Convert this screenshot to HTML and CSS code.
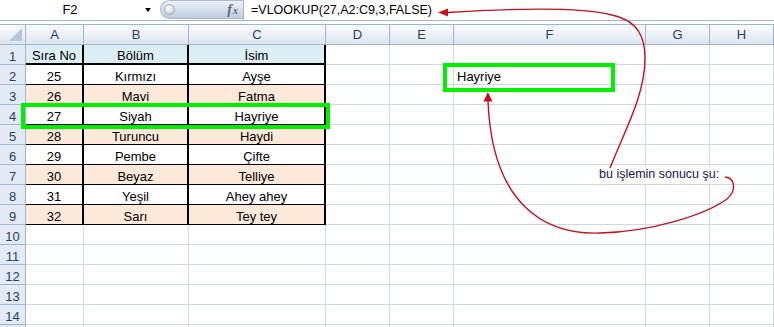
FILE: index.html
```html
<!DOCTYPE html>
<html lang="tr">
<head>
  <meta charset="UTF-8" />
  <title>DÜŞEYARA örneği</title>
  <link rel="stylesheet" href="styles.css">
</head>
<body>
  <div class="window">

    <!-- Formula bar -->
    <div class="formula-bar">
      <div class="name-box">
        <span class="name">F2</span>
        <span class="drop"></span>
      </div>
      <div class="fx-pill">
        <span class="knob"></span>
        <span class="fx"><i>f</i><i class="sub">x</i></span>
      </div>
      <div class="formula">=VLOOKUP(27,A2:C9,3,FALSE)</div>
    </div>

    <!-- Sheet -->
    <div class="sheet">
      <div class="row head">
        <div class="corner"></div>
        <div class="col-h">A</div><div class="col-h">B</div><div class="col-h">C</div><div class="col-h">D</div>
        <div class="col-h">E</div><div class="col-h">F</div><div class="col-h">G</div><div class="col-h">H</div>
      </div>

      <div class="row r1">
        <div class="row-h">1</div>
        <div class="c d top blue">Sıra No</div><div class="c d top blue">Bölüm</div><div class="c d top blue">İsim</div>
        <div class="c"></div><div class="c"></div><div class="c"></div><div class="c"></div><div class="c"></div>
      </div>
      <div class="row">
        <div class="row-h">2</div>
        <div class="c d">25</div><div class="c d">Kırmızı</div><div class="c d">Ayşe</div>
        <div class="c"></div><div class="c"></div><div class="c left">Hayriye</div><div class="c"></div><div class="c"></div>
      </div>
      <div class="row">
        <div class="row-h">3</div>
        <div class="c d peach">26</div><div class="c d peach">Mavi</div><div class="c d peach">Fatma</div>
        <div class="c"></div><div class="c"></div><div class="c"></div><div class="c"></div><div class="c"></div>
      </div>
      <div class="row">
        <div class="row-h">4</div>
        <div class="c d">27</div><div class="c d">Siyah</div><div class="c d">Hayriye</div>
        <div class="c"></div><div class="c"></div><div class="c"></div><div class="c"></div><div class="c"></div>
      </div>
      <div class="row">
        <div class="row-h">5</div>
        <div class="c d peach">28</div><div class="c d peach">Turuncu</div><div class="c d peach">Haydi</div>
        <div class="c"></div><div class="c"></div><div class="c"></div><div class="c"></div><div class="c"></div>
      </div>
      <div class="row">
        <div class="row-h">6</div>
        <div class="c d">29</div><div class="c d">Pembe</div><div class="c d">Çifte</div>
        <div class="c"></div><div class="c"></div><div class="c"></div><div class="c"></div><div class="c"></div>
      </div>
      <div class="row">
        <div class="row-h">7</div>
        <div class="c d peach">30</div><div class="c d peach">Beyaz</div><div class="c d peach">Telliye</div>
        <div class="c"></div><div class="c"></div><div class="c"></div><div class="c"></div><div class="c"></div>
      </div>
      <div class="row">
        <div class="row-h">8</div>
        <div class="c d">31</div><div class="c d">Yeşil</div><div class="c d">Ahey ahey</div>
        <div class="c"></div><div class="c"></div><div class="c"></div><div class="c"></div><div class="c"></div>
      </div>
      <div class="row">
        <div class="row-h">9</div>
        <div class="c d peach">32</div><div class="c d peach">Sarı</div><div class="c d peach">Tey tey</div>
        <div class="c"></div><div class="c"></div><div class="c"></div><div class="c"></div><div class="c"></div>
      </div>
      <div class="row">
        <div class="row-h">10</div>
        <div class="c"></div><div class="c"></div><div class="c"></div><div class="c"></div>
        <div class="c"></div><div class="c"></div><div class="c"></div><div class="c"></div>
      </div>
      <div class="row">
        <div class="row-h">11</div>
        <div class="c"></div><div class="c"></div><div class="c"></div><div class="c"></div>
        <div class="c"></div><div class="c"></div><div class="c"></div><div class="c"></div>
      </div>
      <div class="row">
        <div class="row-h">12</div>
        <div class="c"></div><div class="c"></div><div class="c"></div><div class="c"></div>
        <div class="c"></div><div class="c"></div><div class="c"></div><div class="c"></div>
      </div>
      <div class="row">
        <div class="row-h">13</div>
        <div class="c"></div><div class="c"></div><div class="c"></div><div class="c"></div>
        <div class="c"></div><div class="c"></div><div class="c"></div><div class="c"></div>
      </div>
      <div class="row">
        <div class="row-h">14</div>
        <div class="c"></div><div class="c"></div><div class="c"></div><div class="c"></div>
        <div class="c"></div><div class="c"></div><div class="c"></div><div class="c"></div>
      </div>
      <div class="row last">
        <div class="row-h"></div>
        <div class="c"></div><div class="c"></div><div class="c"></div><div class="c"></div>
        <div class="c"></div><div class="c"></div><div class="c"></div><div class="c"></div>
      </div>
    </div>

    <!-- Drawn shapes on top of the sheet -->
    <div class="mark mark-row"></div>
    <div class="mark mark-result"></div>
    <div class="note">bu işlemin sonucu şu:</div>

    <svg class="arrows" width="774" height="327" viewBox="0 0 774 327">
      <path d="M447 12.5 C520 8 585 8 612 15 C640 21 645 40 645 58 C645 95 625 130 610 168" />
      <polygon points="438,12.5 448,8.5 448,16.5" />
      <path d="M725 177 C735 178 737 190 727 199 C705 215 650 232 600 233 C545 235 492 205 488 101" />
      <polygon points="487.8,92 483.5,101.5 492.5,101.5" />
    </svg>
  </div>
</body>
</html>
```

FILE: styles.css
```css
* {
  box-sizing: border-box;
}

body {
  margin: 0;
  width: 774px;
  height: 327px;
  overflow: hidden;
  background: #fff;
  font-family: "Liberation Sans", Arial, sans-serif;
  font-size: 13px;
  color: #000;
}

.window {
  position: relative;
  width: 774px;
  height: 327px;
  overflow: hidden;
}

/* Formula bar */
.formula-bar {
  display: flex;
  height: 21px;
  border-bottom: 1px solid #a3b5cc;
  margin-bottom: 3px;
}

.name-box {
  display: flex;
  align-items: center;
  width: 160px;
}

.name {
  width: 140px;
  text-align: center;
  line-height: 20px;
}

.drop {
  width: 0;
  height: 0;
  margin-left: 5px;
  border-top: 4px solid #000;
  border-left: 3.5px solid transparent;
  border-right: 3.5px solid transparent;
}

.fx-pill {
  display: flex;
  align-items: center;
  justify-content: space-between;
  width: 83px;
  height: 19px;
  border: 1px solid #a7b8cf;
  border-right: none;
  border-radius: 10px 0 0 10px;
  background: linear-gradient(#eef2f8, #d2dcea 55%, #bfcde0);
}

.knob {
  width: 11px;
  height: 11px;
  margin-left: 3px;
  border-radius: 50%;
  border: 1px solid #a5afbc;
  background: radial-gradient(circle at 40% 35%, #ffffff, #d8dde4 60%, #a9b2be);
}

.fx {
  padding-right: 5px;
  font-family: "Liberation Serif", serif;
  font-size: 14px;
  font-weight: bold;
  color: #5d6876;
}

.fx .sub {
  font-size: 10px;
  margin-left: 1px;
}

.formula {
  flex: 1;
  border-left: 1px solid #a7b8cf;
  padding-left: 7px;
  line-height: 20px;
  font-size: 12.5px;
}

/* Sheet grid */
.row {
  display: grid;
  grid-template-columns: 26px 58px 105px 137px 64px 64px 192px 64px 64px;
  height: 20px;
}

.row.head {
  height: 21px;
}

.corner,
.col-h {
  border-top: 1px solid #9eb6ce;
  border-right: 1px solid #9eb6ce;
  border-bottom: 1px solid #9eb6ce;
  background: linear-gradient(#f8fafc, #e9eef5 60%, #dce4ee);
}

.corner {
  position: relative;
}

.corner::after {
  content: "";
  position: absolute;
  right: 3px;
  bottom: 3px;
  border-left: 13px solid transparent;
  border-bottom: 13px solid #b6c6da;
}

.col-h {
  text-align: center;
  line-height: 19px;
  color: #27415f;
}

.row-h {
  border-right: 1px solid #9eb6ce;
  border-bottom: 1px solid #9eb6ce;
  background: #e2eaf5;
  text-align: center;
  padding-top: 5px;
  line-height: 14px;
  color: #27415f;
}

.c {
  border-right: 1px solid #d0d7e5;
  border-bottom: 1px solid #d0d7e5;
  padding-top: 5px;
  line-height: 14px;
  text-align: center;
  white-space: nowrap;
}

.c.left {
  text-align: left;
  padding-left: 3px;
}

.c.d {
  border-right: 2px solid #000;
  border-bottom: 1px solid #000;
}

.c.d.top {
  border-bottom-width: 2px;
  padding-top: 4px;
}

.blue {
  background: #dbeef3;
}

.peach {
  background: #fde9d9;
}

/* Shapes drawn over the sheet */
.mark {
  position: absolute;
  border: 4px solid #00f000;
}

.mark-row {
  left: 21px;
  top: 103px;
  width: 309px;
  height: 26px;
}

.mark-result {
  left: 443px;
  top: 63px;
  width: 172px;
  height: 29px;
}

.note {
  position: absolute;
  left: 594px;
  top: 167px;
  width: 137px;
  height: 17px;
  padding-left: 5px;
  background: #fff;
  font-size: 12.5px;
  line-height: 15px;
  color: #141450;
  white-space: nowrap;
}

.arrows {
  position: absolute;
  top: 0;
  left: 0;
  pointer-events: none;
}

.arrows path {
  fill: none;
  stroke: #c8101c;
  stroke-width: 1.4;
}

.arrows polygon {
  fill: #c8101c;
}
```
